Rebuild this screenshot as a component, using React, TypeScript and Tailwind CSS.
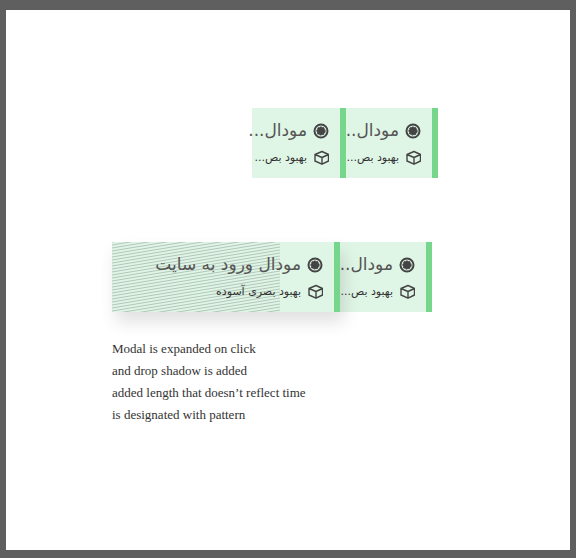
import React from "react";

const PATTERN_LINES = Array.from({ length: 34 }, (_, i) => i * 3);

function TargetIcon() {
  return (
    <svg viewBox="0 0 16 16" className="size-4 shrink-0" fill="none" stroke="#444" aria-hidden="true">
      <circle cx="8" cy="8" r="6.5" strokeWidth="2" />
      <circle cx="8" cy="8" r="4" fill="#444" strokeWidth="1.2" strokeDasharray="1.7 1.2" />
    </svg>
  );
}

function CubeIcon() {
  return (
    <svg viewBox="0 0 16 16" className="size-4 shrink-0" fill="none" stroke="#444" strokeWidth="1.4" strokeLinejoin="round" aria-hidden="true">
      <path d="M9 1.500 15.500 4.500v6.500L9 14.200 2 11V4.500ZM2 4.500 9 7.500l6.500-3M9 7.500v6.700" />
    </svg>
  );
}

type CardProps = { title: string; subtitle: string; size: string; expanded?: boolean };

function ModalCard({ title, subtitle, size, expanded = false }: CardProps) {
  return (
    <button
      type="button"
      dir="rtl"
      aria-expanded={expanded}
      className={`relative shrink-0 border-r-[6px] border-[#75d68c] bg-[#dff5e6] text-right ${size} ${
        expanded ? "z-10 shadow-[4px_10px_16px_rgba(0,0,0,0.12)]" : ""
      }`}
    >
      {expanded && (
        <svg className="absolute inset-y-0 left-0 h-full w-[168px]" viewBox="0 0 168 70" aria-hidden="true">
          {PATTERN_LINES.map((y) => (
            <path key={y} d={`M0 ${y}L168 ${y - 28}`} stroke="#b2c5b9" strokeWidth="1" />
          ))}
        </svg>
      )}
      <span className="relative flex flex-col pt-2 pr-[11px] pb-2">
        <span className="flex h-[30px] items-center gap-1.5">
          <TargetIcon />
          <span className="pb-0.5 text-[17px] leading-7 whitespace-nowrap text-[#555]">{title}</span>
        </span>
        <span className="flex h-6 items-center gap-1.5">
          <CubeIcon />
          <span className="text-[11px] leading-6 whitespace-nowrap text-[#333]">{subtitle}</span>
        </span>
      </span>
    </button>
  );
}

export default function App() {
  return (
    <div className="min-h-screen bg-[#5f5f5f] px-1.5 pt-2.5 pb-2 font-['DejaVu_Sans',sans-serif]">
      <main className="min-h-[540px] bg-white px-[106px] pt-[98px]">
        <div className="flex pl-[140px]">
          <ModalCard title="مودال..." subtitle="بهبود بص..." size="w-[94px]" />
          <ModalCard title="مودال.." subtitle="بهبود بص..." size="w-[92px]" />
        </div>
        <div className="mt-16 flex">
          <ModalCard title="مودال ورود به سایت" subtitle="بهبود بصری آسوده" size="w-[228px]" expanded />
          <ModalCard title="مودال.." subtitle="بهبود بص..." size="w-[92px]" />
        </div>
        <p className="mt-[26px] font-['Liberation_Serif',serif] text-[13px] leading-[22px] text-[#333]">
          Modal is expanded on click
          <br />
          and drop shadow is added
          <br />
          added length that doesn’t reflect time
          <br />
          is designated with pattern
        </p>
      </main>
    </div>
  );
}
